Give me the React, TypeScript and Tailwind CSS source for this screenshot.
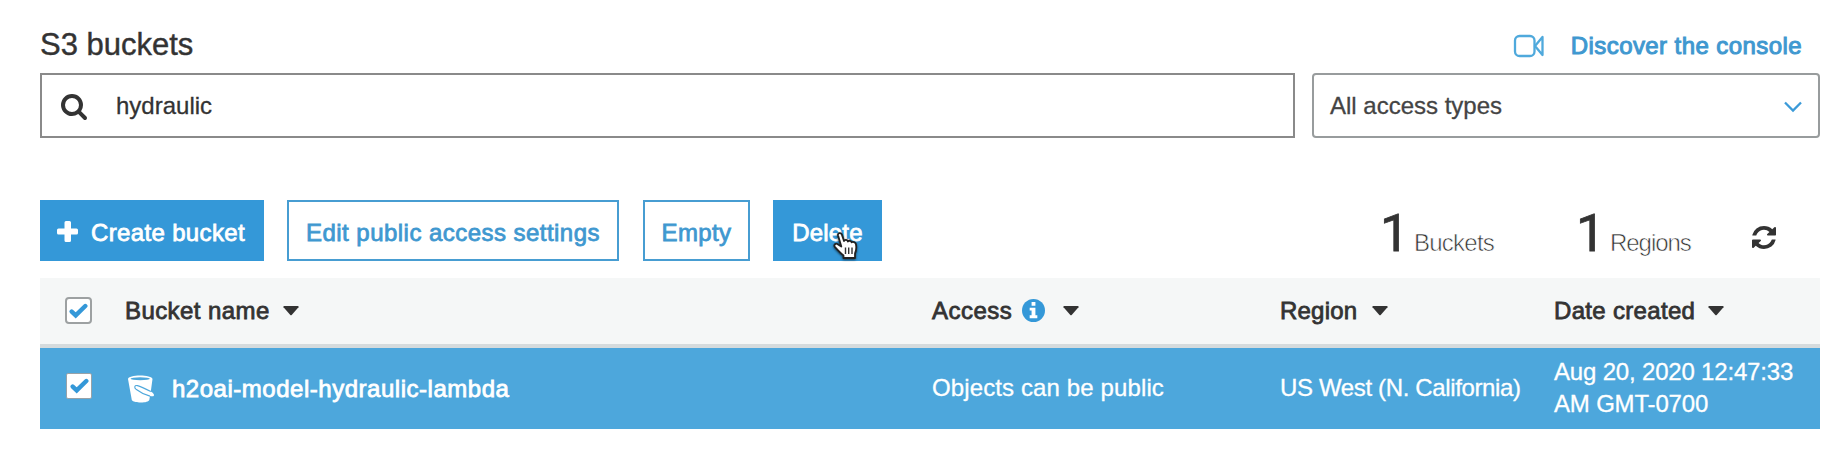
import React from "react";

const medium = "[-webkit-text-stroke:0.8px_currentColor]";

function SearchIcon() {
  return (
    <svg viewBox="0 0 1664 1792" className="h-[28px] w-[26px] fill-[#333]">
      <path d="M1152 832q0-185-131.500-316.500t-316.500-131.500-316.500 131.500-131.500 316.500 131.500 316.500 316.500 131.500 316.500-131.500 131.500-316.500zm512 832q0 52-38 90t-90 38q-54 0-90-38l-343-342q-179 124-399 124-143 0-273.500-55.500t-225-150-150-225-55.500-273.500 55.500-273.500 150-225 225-150 273.500-55.500 273.500 55.500 225 150 150 225 55.500 273.500q0 220-124 399l343 343q37 37 37 90z" />
    </svg>
  );
}

function RefreshIcon() {
  return (
    <svg viewBox="0 128 1536 1536" preserveAspectRatio="none" className="block h-[23px] w-[24px] fill-[#333]">
      <path d="M1511 1056q0 5-1 7-64 268-268 434.500t-478 166.500q-146 0-282.500-55t-243.500-157l-129 129q-19 19-45 19t-45-19-19-45v-448q0-26 19-45t45-19h448q26 0 45 19t19 45-19 45l-137 137q71 66 161 102t187 36q134 0 250-65t186-179q11-17 53-117 8-23 30-23h192q13 0 22.500 9.500t9.500 22.500zm25-800v448q0 26-19 45t-45 19h-448q-26 0-45-19t-19-45 19-45l138-138q-148-137-349-137-134 0-250 65t-186 179q-11 17-53 117-8 23-30 23h-199q-13 0-22.500-9.500t-9.500-22.500v-7q65-268 270-434.500t480-166.500q146 0 284 55.500t245 156.500l130-129q19-19 45-19t45 19 19 45z" />
    </svg>
  );
}

function VideoIcon() {
  return (
    <svg viewBox="0 0 32 24" className="h-[24px] w-[32px] fill-none stroke-[#4fa9dc]" strokeWidth="2.300" strokeLinejoin="round">
      <rect x="2" y="2" width="19.500" height="20" rx="4.500" />
      <path d="M22 12 29.500 3V21Z" />
    </svg>
  );
}

function Caret() {
  return (
    <svg viewBox="0 0 16 10" className="h-[10px] w-[16px] shrink-0 fill-[#333]">
      <path d="M1 0h14q1 .4.500 1.200L8.700 9q-.7.700-1.400 0L.500 1.200Q0 .4 1 0Z" />
    </svg>
  );
}

function Checkbox({ className = "" }: { className?: string }) {
  return (
    <span className={"flex items-center justify-center bg-white " + className}>
      <svg viewBox="0 0 19 16" className="h-[16px] w-[19px] shrink-0 fill-none stroke-[#3498d8]" strokeWidth="4.400" strokeLinecap="round">
        <path d="M2.700 8.600 6.700 12.400 16.300 3" />
      </svg>
    </span>
  );
}

function InfoIcon() {
  return (
    <svg viewBox="0 0 24 24" className="block h-[23px] w-[23px]">
      <circle cx="12" cy="12" r="12" fill="#3498d8" />
      <path fill="#fff" d="M10 3h4v4h-4zM8 9h6v8h2v3H8v-3h2v-5H8z" />
    </svg>
  );
}

function BucketIcon() {
  return (
    <svg viewBox="0 0 28 28" className="h-[28px] w-[28px] shrink-0">
      <path fill="#fff" d="M1 4C1 1.800 7 .5 13 .5S25.500 1.800 25.500 4l-1.700 12.500c2.400 1.500 3.600 3 3.200 4-.4.900-2 1-4 .600L22.300 25c-.5 1.600-4 2.500-8.300 2.500S5.300 26.600 4.800 25Z" />
      <ellipse cx="13.200" cy="3.700" rx="9.700" ry="1.500" fill="#4da7dc" />
      <path d="M23.800 16.500C18 13.500 14 11.500 10.500 10.600c-3.200-.6-3.500 1.900-1.500 3.600 3 2.300 8 5.300 14 6.900" fill="none" stroke="#4da7dc" strokeWidth="1.100" />
    </svg>
  );
}

function HandCursor() {
  return (
    <svg viewBox="0 0 27 28" className="absolute left-[60px] top-[32px] h-[28px] w-[27px] drop-shadow-[0_1px_1px_rgba(0,0,0,0.6)]">
      <path
        d="M5 3.200C4.600.8 8 .3 8.900 2.600L11 9c.8-1.600 3.500-1.300 3.900.5 1-1.300 3.300-.8 3.700.9 1.200-1 3.800-.3 4.300 1.600.7 3.500.5 6.500-.9 9.500V26H10.500v-2.500C7.500 21 4.500 17.800 1.800 14.800c-1.300-2 .8-4 2.900-2.600L8.300 14.500Z"
        fill="#fff"
        stroke="#222"
        strokeWidth="1.800"
        strokeLinejoin="round"
      />
      <path d="M12.500 15.500v6.500M15.700 15.500v6.500M19 15.500v6.500" stroke="#333" strokeWidth="1.400" />
    </svg>
  );
}

export default function App() {
  return (
    <main className="h-[452px] w-[1844px] overflow-hidden bg-white pl-[40px] pr-[24px] pt-[25px] font-['Liberation_Sans',Arial,sans-serif] text-[24px] text-[#333]">
      <header className="flex h-[48px] items-start justify-between">
        <h1 className="text-[31px] leading-[40px] [-webkit-text-stroke:0.4px_currentColor]">S3 buckets</h1>
        <a className="mr-[18px] flex items-center text-[#3f98d0]">
          <span className="mr-[26px] mt-[1px]"><VideoIcon /></span>
          <span className="mt-[2px] leading-[38px] tracking-[0.42px] [-webkit-text-stroke:1px_currentColor]">Discover the console</span>
        </a>
      </header>

      <section className="flex h-[65px] gap-[17px]">
        <div className="flex w-[1255px] items-center border-2 border-[#8a8a8a] pl-[19px]">
          <SearchIcon />
          <span className="ml-[29px] [-webkit-text-stroke:0.3px_currentColor]">hydraulic</span>
        </div>
        <div className="flex w-[508px] items-center justify-between rounded-[4px] border-2 border-[#989c9d] pl-[16px] pr-[16px] text-[#444]">
          <span className="[-webkit-text-stroke:0.3px_currentColor]">All access types</span>
          <svg viewBox="0 0 18 12" className="mt-[2px] h-[12px] w-[18px] fill-none stroke-[#3b9ad8]" strokeWidth="2.300">
            <path d="M1 1.500 9 9.500 17 1.500" />
          </svg>
        </div>
      </section>

      <section className="mt-[62px] flex h-[61px] justify-between">
        <div className={"flex text-[#3f98d0] " + medium}>
          <button className="flex w-[224px] items-center bg-[#3498d8] pl-[17px] text-white">
            <svg viewBox="0 0 21 21" className="mt-[2px] h-[21px] w-[21px] fill-white">
              <path d="M9 0h3.500q1.500 0 1.500 1.500V7.500h5.500q1.500 0 1.500 1.500v3q0 1.500-1.500 1.500H14v6q0 1.500-1.500 1.500H9q-1.500 0-1.500-1.500v-6h-6Q0 13.500 0 12V9q0-1.500 1.500-1.500h6v-6Q7.500 0 9 0Z" />
            </svg>
            <span className="ml-[13px] pt-[4px] tracking-[0.35px]">Create bucket</span>
          </button>
          <button className="ml-[23px] w-[332px] border-2 border-[#479dd2] pt-[4px] tracking-[0.46px]">Edit public access settings</button>
          <button className="ml-[24px] w-[107px] border-2 border-[#479dd2] pt-[4px] tracking-[0.4px]">Empty</button>
          <button className="relative ml-[23px] w-[109px] bg-[#3498d8] pt-[4px] tracking-[0.2px] text-white">
            Delete
            <HandCursor />
          </button>
        </div>
        <div className="flex items-baseline leading-[67px]">
          <span className="w-[28px] font-['Roboto',sans-serif] text-[52px] [-webkit-text-stroke:0.8px_currentColor]">1</span>
          <span className="ml-[6px] w-[162px] tracking-[-0.75px] [-webkit-text-stroke:0.6px_white]">Buckets</span>
          <span className="w-[28px] font-['Roboto',sans-serif] text-[52px] [-webkit-text-stroke:0.8px_currentColor]">1</span>
          <span className="ml-[6px] w-[142px] tracking-[-1.05px] [-webkit-text-stroke:0.6px_white]">Regions</span>
          <span className="mr-[44px] mt-[26px] self-start leading-none"><RefreshIcon /></span>
        </div>
      </section>

      <section className="mt-[17px]">
        <div className={"grid h-[70px] grid-cols-[85px_807px_348px_274px_266px] items-center border-b-4 border-[#d5dbdd] bg-[#f5f7f7] " + medium}>
          <Checkbox className="mb-[1px] ml-[25px] h-[27px] w-[27px] rounded-[4px] border-2 border-[#9da1a2]" />
          <span className="flex items-center gap-[13px] tracking-[0.42px]">Bucket name <Caret /></span>
          <span className="flex items-center"><span className="tracking-[0.5px]">Access</span><span className="mb-[1px] ml-[10px] mr-[18px]"><InfoIcon /></span><Caret /></span>
          <span className="flex items-center gap-[15px] tracking-[0.2px]">Region <Caret /></span>
          <span className="flex items-center gap-[13px] tracking-[0.32px]">Date created <Caret /></span>
        </div>
        <div className="grid h-[81px] grid-cols-[85px_807px_348px_274px_266px] items-center bg-[#4da7dc] pb-[2px] text-white">
          <Checkbox className="mb-[3px] ml-[26px] h-[26px] w-[26px] rounded-[2px] border border-[#98a2a8]" />
          <span className="flex items-center gap-[17px] pl-[2px]">
            <span className="pt-[2px]"><BucketIcon /></span>
            <span className={"pt-[2px] tracking-[0.52px] " + medium}>h2oai-model-hydraulic-lambda</span>
          </span>
          <span className="tracking-[0.12px] [-webkit-text-stroke:0.3px_currentColor]">Objects can be public</span>
          <span className="tracking-[-0.36px] [-webkit-text-stroke:0.3px_currentColor]">US West (N. California)</span>
          <span className="leading-[32px] tracking-[-0.18px] [-webkit-text-stroke:0.3px_currentColor]">Aug 20, 2020 12:47:33<br />AM GMT-0700</span>
        </div>
      </section>
    </main>
  );
}
